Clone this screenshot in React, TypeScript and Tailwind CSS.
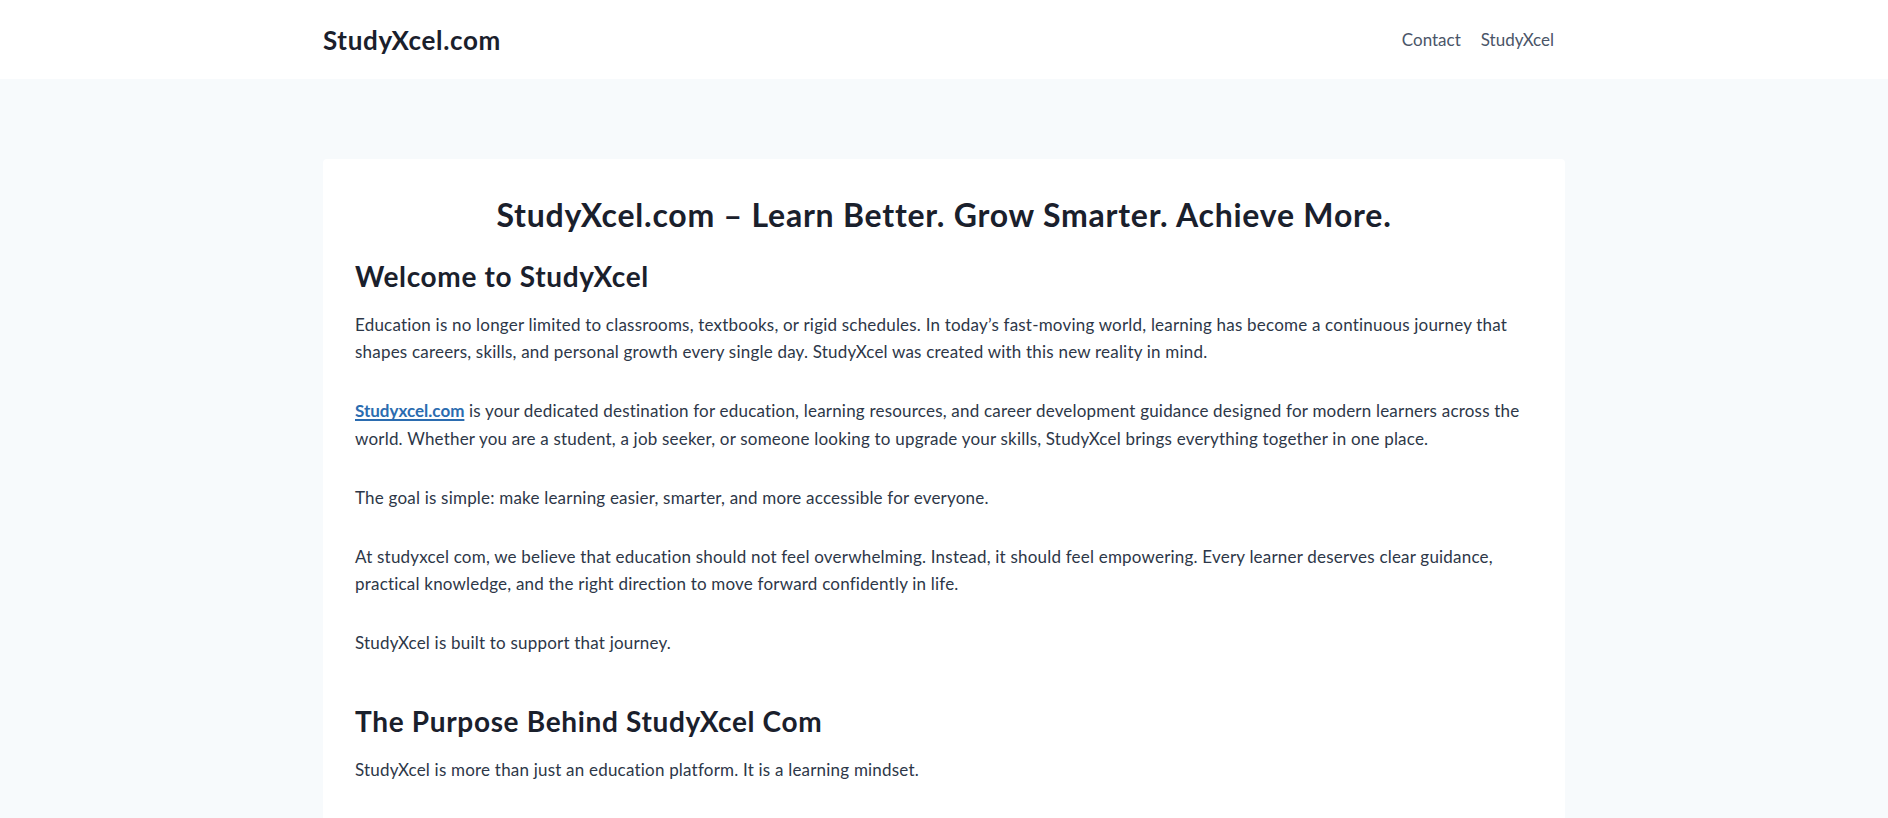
const font = "font-['Lato','Noto_Sans',sans-serif]";

function Header() {
  return (
    <header className="bg-white">
      <div className="mx-auto flex h-[79px] w-[1242px] items-center justify-between">
        <a href="#" className="text-[26px] font-bold leading-none tracking-[0.025em] text-[#1a202c]">
          StudyXcel.com
        </a>
        <nav className="flex text-[17px] text-[#4a5568]">
          <a href="#" className="px-[10px]">Contact</a>
          <a href="#" className="pl-[10px] pr-[11px]">StudyXcel</a>
        </nav>
      </div>
    </header>
  );
}

export default function App() {
  return (
    <div className={`min-h-screen bg-[#f7fafc] text-[#2d3748] ${font}`}>
      <Header />
      <main className="pt-[80px]">
        <article className="mx-auto w-[1242px] rounded-t-[4px] bg-white px-8 pt-8 pb-24">
          <h1 className="text-center text-[32px] font-bold leading-[48px] tracking-[0.024em] text-[#1a202c]">
            StudyXcel.com – Learn Better. Grow Smarter. Achieve More.
          </h1>

          <div className="mt-4 text-[17px] leading-[27.2px] tracking-[0.012em]">
            <h2 className="mb-[14px] text-[28px] font-bold leading-[42px] tracking-[0.024em] text-[#1a202c]">
              Welcome to StudyXcel
            </h2>
            <p className="mb-8">
              Education is no longer limited to classrooms, textbooks, or rigid schedules. In today’s fast-moving world, learning has become a continuous journey that
              <br />
              shapes careers, skills, and personal growth every single day. StudyXcel was created with this new reality in mind.
            </p>
            <p className="mb-8">
              <a href="#" className="font-bold tracking-normal text-[#2b6cb0] underline decoration-[1.5px] underline-offset-2">
                Studyxcel.com
              </a>{' '}
              is your dedicated destination for education, learning resources, and career development guidance designed for modern learners across the
              <br />
              world. Whether you are a student, a job seeker, or someone looking to upgrade your skills, StudyXcel brings everything together in one place.
            </p>
            <p className="mb-8">
              The goal is simple: make learning easier, smarter, and more accessible for everyone.
            </p>
            <p className="mb-8">
              At studyxcel com, we believe that education should not feel overwhelming. Instead, it should feel empowering. Every learner deserves clear guidance,
              <br />
              practical knowledge, and the right direction to move forward confidently in life.
            </p>
            <p>StudyXcel is built to support that journey.</p>

            <h2 className="mt-[43px] mb-[14px] text-[28px] font-bold leading-[42px] tracking-[0.024em] text-[#1a202c]">
              The Purpose Behind StudyXcel Com
            </h2>
            <p>StudyXcel is more than just an education platform. It is a learning mindset.</p>
          </div>
        </article>
      </main>
    </div>
  );
}
